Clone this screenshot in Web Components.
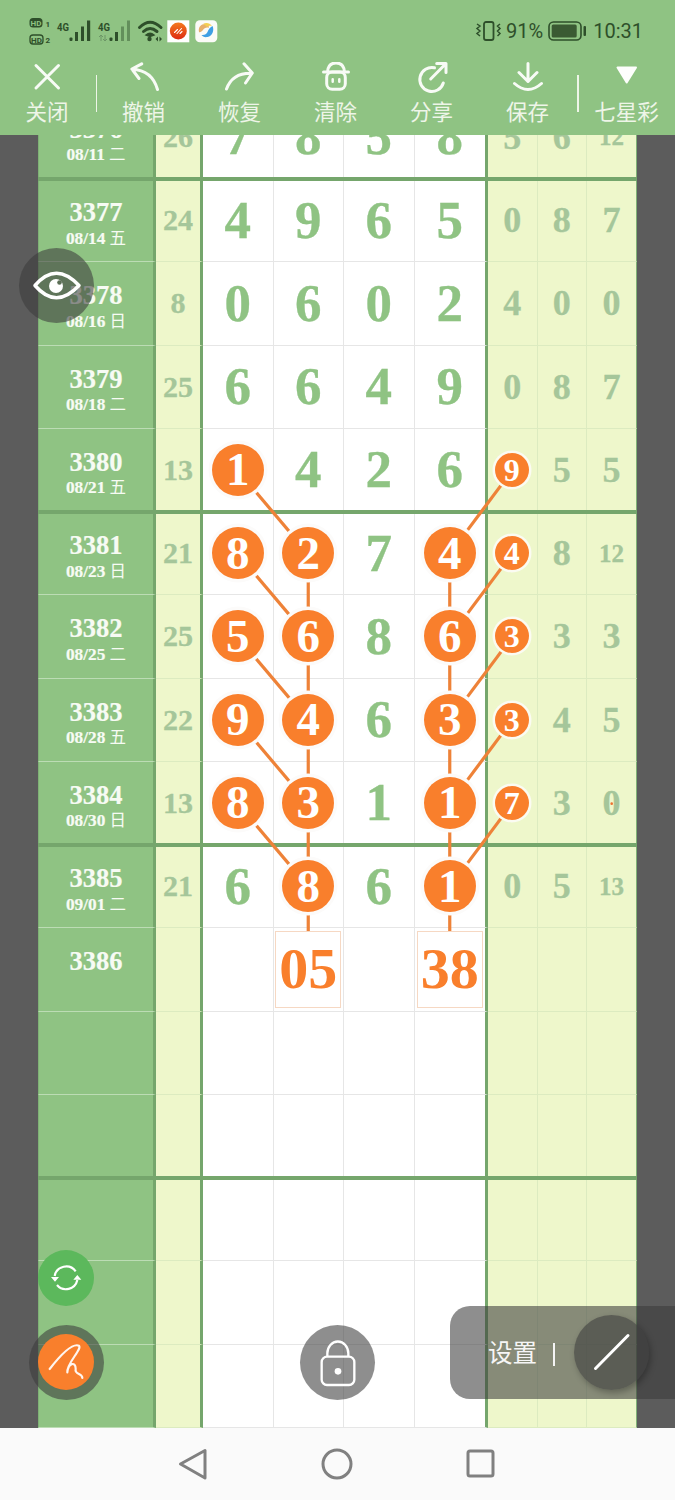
<!DOCTYPE html>
<html lang="zh">
<head>
<meta charset="utf-8">
<title>七星彩</title>
<style>
html,body{margin:0;padding:0;background:#5c5c5c;width:675px;height:1500px;overflow:hidden}
</style>
</head>
<body>
<lotto-app></lotto-app>
<script>
const GREEN='#8fc383', THICK='#75a66c', ORANGE='#f97f2c', SERIF='"Liberation Serif","Noto Serif",serif', CJK='"Noto Sans CJK SC",sans-serif';
const ROW_H=83.25;

class StatusBar extends HTMLElement{
  constructor(){super();this.attachShadow({mode:'open'}).innerHTML=`
  <style>
  :host{display:flex;align-items:center;justify-content:space-between;height:62px;padding:0 32px 0 28px;box-sizing:border-box;color:#2e4f2a;font:400 20px Roboto,sans-serif}
  .r{display:flex;align-items:center}
  svg{display:block}
  text{font-family:Roboto,sans-serif;font-weight:700;fill:#2e4f2a}
  </style>
  <svg width="192" height="40" viewBox="28 11 192 40">
    <rect x="29.5" y="18" width="13" height="9.5" rx="3.5" fill="#2e4f2a"/><text x="36" y="25.8" font-size="8" text-anchor="middle" style="fill:#8fc383">HD</text>
    <text x="45.5" y="26.5" font-size="8">1</text>
    <rect x="30" y="35" width="13" height="9" rx="3" fill="none" stroke="#2e4f2a" stroke-width="1.3"/><text x="36.5" y="42.6" font-size="8" text-anchor="middle">HD</text>
    <text x="45.5" y="43" font-size="8">2</text>
    <text x="57" y="30.5" font-size="11.5" textLength="12" lengthAdjust="spacingAndGlyphs">4G</text>
    <g fill="#2e4f2a"><rect x="69.5" y="37.5" width="3" height="3.5" rx="1"/><rect x="75" y="32" width="3" height="9"/><rect x="81" y="26.500" width="3" height="14.5"/><rect x="87" y="20.500" width="3.200" height="20.500"/></g>
    <text x="98" y="30.500" font-size="11.500" textLength="12" lengthAdjust="spacingAndGlyphs">4G</text>
    <path d="M101 35v6M99 37l2-2 2 2M105 35v6M103 39l2 2 2-2" stroke="#6c9666" stroke-width="1" fill="none"/>
    <g fill="#2e4f2a"><rect x="109.500" y="37.500" width="3" height="3.500" rx="1"/><rect x="115" y="32" width="3" height="9"/></g>
    <g fill="#638f5b"><rect x="121" y="26.500" width="3" height="14.500"/><rect x="127" y="20.500" width="3" height="20.500"/></g>
    <g fill="none" stroke="#2e4f2a" stroke-width="3" stroke-linecap="round"><path d="M139.500 27.500Q150 17 161 27.500"/><path d="M143.500 31.500Q150 25.500 157 31.500"/></g>
    <path d="M146 35Q150 31.500 154 35L150 36.500Z" fill="#2e4f2a" stroke="#2e4f2a" stroke-width="1.500"/>
    <circle cx="149.500" cy="39" r="2.200" fill="#2e4f2a"/>
    <path d="M158 36.500v5l-2.500-2.500zM159.500 36.500v5l2.500-2.500z" fill="#2e4f2a"/>
    <rect x="167.300" y="20.300" width="22" height="22" fill="#fff"/>
    <defs><linearGradient id="r" x1="0" y1="0" x2="0" y2="1"><stop offset="0" stop-color="#f47a20"/><stop offset="1" stop-color="#dd2a12"/></linearGradient></defs>
    <circle cx="178.300" cy="31" r="8.500" fill="url(#r)"/>
    <path d="M174.500 32.500l3-3M177 33.500l4.500-5M180 33.500l2-2" stroke="#fff" stroke-width="1.100" stroke-linecap="round"/>
    <rect x="195.300" y="20.300" width="22" height="22" rx="4.500" fill="#fbfbf8"/>
    <path d="M199 32c-1-5 2-8 6-8 3 0 4 2 4 4-2-1-5 0-6 2-1 1-3 3-4 2z" fill="#e7b06b"/>
    <path d="M203 24c3-2 7-1 9 2-2-.5-4 0-5 1-1-1.500-2.500-2.500-4-3z" fill="#f4cf52"/>
    <path d="M212.500 26c2 4 0 10-5 11-3 .5-5-.5-6-2 3 .5 5-1 6-3 1-3 3-5 5-6z" fill="#3f9fe4"/>
  </svg>
  <div class="r">
    <svg width="27" height="24" viewBox="0 0 27 24" style="margin-right:4px"><rect x="9" y="3" width="9.500" height="18" rx="2" fill="none" stroke="#2e4f2a" stroke-width="1.800"/>
      <path d="M2 5l3 2-3 2.500 3 2.500-3 2.500 3 2.500M25 5l-2.500 2 2.500 2.500-2.500 2.500 2.500 2.500-2.500 2.500" fill="none" stroke="#2e4f2a" stroke-width="1.500"/></svg>
    <span>91%</span>
    <svg width="39" height="20" viewBox="0 0 39 20" style="margin:0 6px 0 5px"><rect x="1" y="1" width="32" height="18" rx="4.500" fill="none" stroke="#2e4f2a" stroke-width="1.600"/><rect x="3.700" y="3.500" width="25" height="13" rx="1.500" fill="#3a5a33"/><rect x="35.500" y="5" width="2.500" height="10" rx="1" fill="#2e4f2a"/></svg>
    <span>10:31</span>
  </div>`;}
}
class ToolItem extends HTMLElement{
  constructor(){super();this.attachShadow({mode:'open'}).innerHTML=`
  <style>
  :host{display:flex;flex-direction:column;align-items:center;flex:0 0 96px;color:#eef5e8;font:400 21.500px/24px ${CJK};white-space:nowrap}
  </style><slot name="icon"></slot><slot></slot>`;}
}
class ToolBar extends HTMLElement{
  constructor(){super();this.attachShadow({mode:'open'}).innerHTML=`
  <style>
  :host{display:flex;height:73px;align-items:flex-start}
  .sep{flex:0 0 1.500px;height:37px;background:#eef5e8;margin-top:13px}
  tool-item:first-of-type{flex-basis:94px}
  svg{display:block;width:32px;height:32px;fill:none;stroke:#f8fbf6;stroke-width:3;stroke-linecap:round;stroke-linejoin:round;margin-bottom:5px}
  </style>
  <tool-item><svg slot="icon" viewBox="0 0 32 32"><path d="M5 3.500L27.500 26M27.500 3.500L5 26"/></svg>关闭</tool-item>
  <div class="sep" style="margin-left:1.500px"></div>
  <tool-item style="margin-left:-1.500px"><svg slot="icon" viewBox="0 0 32 32"><path d="M13.700 1.800L3.900 7 11 16.500M4 7.200Q24 8 29.500 27.500"/></svg>撤销</tool-item>
  <tool-item><svg slot="icon" viewBox="0 0 32 32" style="margin-left:1px"><path d="M20 1.800L28.300 11 21.500 21M28 11.300Q8.500 10.500 2.500 27"/></svg>恢复</tool-item>
  <tool-item><svg slot="icon" viewBox="0 0 32 32"><path d="M7.500 10Q8 1 16 1T24.500 10M3.500 10H28.500"/><rect x="6.700" y="10" width="18.600" height="17.300" rx="5.500"/><path d="M12.700 17.200v2.500M19.300 17.200v2.500" stroke-width="2.500"/></svg>清除</tool-item>
  <tool-item><svg slot="icon" viewBox="0 0 32 32"><path d="M18.500 5.800A12 12 0 1 0 27.300 21M14.700 17L29 2.500M20.700 1.500H30V10.500"/></svg>分享</tool-item>
  <tool-item><svg slot="icon" viewBox="0 0 32 32"><path d="M16 1.500V19.500M7 10.500L16 19.500 25 10.500M2.500 21.500Q16 33.500 29.500 21.500"/></svg>保存</tool-item>
  <div class="sep" style="margin-left:1.500px"></div>
  <tool-item style="flex:0 0 96px"><svg slot="icon" viewBox="0 0 32 32" style="fill:#fdfefc;stroke:#fdfefc;stroke-width:2"><path d="M6.500 5.500H25L15.700 20.500Z"/></svg>七星彩</tool-item>`;}
}
class LottoBall extends HTMLElement{
  constructor(){super();this.attachShadow({mode:'open'}).innerHTML=`
  <style>
  :host{display:flex;align-items:center;justify-content:center;position:relative;z-index:2;border-radius:50%;background:${ORANGE};color:#fff;font:700 47px/1 ${SERIF};width:52px;height:52px;box-shadow:0 0 0 3.500px #fcfbfa}
  :host([small]){width:34px;height:34px;font-size:32px;box-shadow:0 0 0 2.500px #fbfbf2;left:-.500px}
  </style><slot></slot>`;}
}
class PickBox extends HTMLElement{
  constructor(){super();this.attachShadow({mode:'open'}).innerHTML=`
  <style>
  :host{display:flex;align-items:center;justify-content:center;position:relative;z-index:2;box-sizing:border-box;width:66px;height:77px;background:#fff;border:1px solid #f6d8c3;color:${ORANGE};font:700 58px/1 ${SERIF}}
  </style><slot></slot>`;}
}
class LottoRow extends HTMLElement{
  connectedCallback(){
    if(this.shadowRoot)return;
    const no=this.getAttribute('no')||'',date=this.getAttribute('date')||'',sum=this.getAttribute('sum')||'';
    const main=(this.getAttribute('main')||',,,').split(','),side=(this.getAttribute('side')||',,').split(',');
    const hit=v=>v.endsWith('*');
    const mc=main.map((v,i)=>{
      let inner='';
      if(v.startsWith('#'))inner=`<pick-box>${v.slice(1)}</pick-box>`;
      else if(hit(v))inner=`<lotto-ball>${v.slice(0,-1)}</lotto-ball>`;
      else inner=v;
      return `<div class="c m${i==3?' ml':''}">${inner}</div>`;
    }).join('');
    const sc=side.map((v,i)=>{
      const d=v.replace('*','');
      const inner=hit(v)?`<lotto-ball small>${d}</lotto-ball>`:d;
      return `<div class="c s${d.length>1?' two':''}${i==2?' sl':''}">${inner}</div>`;
    }).join('');
    const [dn,dw]=date.split(' ');
    this.attachShadow({mode:'open'}).innerHTML=`
    <style>
    :host{display:grid;grid-template-columns:118px 47px 70.500px 70.500px 70.500px 73.500px 49.500px 49.500px 50px;height:${ROW_H}px;position:relative;box-sizing:border-box}
    :host([thick])::after{content:"";position:absolute;left:0;right:0;bottom:-1.500px;height:3.500px;background:${THICK};z-index:1}
    .c{display:flex;align-items:center;justify-content:center;box-sizing:border-box;border-bottom:1px solid #e6e6e6;font-family:${SERIF};font-weight:700;line-height:1}
    .id{flex-direction:column;justify-content:flex-start;background:${GREEN};color:#f7fbf4;border-bottom-color:#bcdcb4;border-right:3px solid ${THICK};border-left:1.500px solid #7fb176;padding-top:19px;-webkit-text-stroke:.2px #f7fbf4}
    .no{font-size:26.500px;line-height:29px;height:29px}
    .date{font-size:17.300px;line-height:21px;margin-top:-.500px}
    .date span{font:400 16.500px/21px ${CJK};-webkit-text-stroke:0}
    .sum{background:#eef7cb;color:#a5c69a;font-size:30px;border-bottom-color:#dcebc0;border-right:3px solid ${THICK};-webkit-text-stroke:.3px #a5c69a}
    .m{background:#fff;color:${GREEN};font-size:53px;border-right:1px solid #e6e6e6;-webkit-text-stroke:.3px ${GREEN}}
    .ml{border-right:3px solid ${THICK}}
    .s{background:#eef7cb;color:#a5c69a;font-size:36px;border-bottom-color:#dcebc0;border-right:1px solid #dcebc0;-webkit-text-stroke:.3px #a5c69a}
    .two{font-size:25px}
    .sl{border-right:1.500px solid #7fb176}
    lotto-ball{-webkit-text-stroke:0}
    pick-box{-webkit-text-stroke:0}
    </style>
    <div class="c id"><div class="no">${no}</div>${date?`<div class="date">${dn} <span>${dw}</span></div>`:''}</div>
    <div class="c sum">${sum}</div>${mc}${sc}`;
  }
}
class LottoBoard extends HTMLElement{
  constructor(){
    super();
    const rows=[
      ['3376','08/11 二','26','7,8,5,8','5,6,12',1],
      ['3377','08/14 五','24','4,9,6,5','0,8,7'],
      ['3378','08/16 日','8','0,6,0,2','4,0,0'],
      ['3379','08/18 二','25','6,6,4,9','0,8,7'],
      ['3380','08/21 五','13','1*,4,2,6','9*,5,5',1],
      ['3381','08/23 日','21','8*,2*,7,4*','4*,8,12'],
      ['3382','08/25 二','25','5*,6*,8,6*','3*,3,3'],
      ['3383','08/28 五','22','9*,4*,6,3*','3*,4,5'],
      ['3384','08/30 日','13','8*,3*,1,1*','7*,3,0',1],
      ['3385','09/01 二','21','6,8*,6,1*','0,5,13'],
      ['3386','','',',#05,,#38',',,'],
      ['','','',',,,',',,'],
      ['','','',',,,',',,',1],
      ['','','',',,,',',,'],
      ['','','',',,,',',,'],
      ['','','',',,,',',,'],
    ];
    const cy=i=>ROW_H*(i+.5), X=[199.750,270.250,411.750,474];
    let seg='';
    const L=(a,b,c,d)=>{seg+=`<line x1="${a}" y1="${b}" x2="${c}" y2="${d}"/>`;};
    for(let i=4;i<=8;i++){
      L(X[0],cy(i),X[1],cy(i+1));
      L(X[3],cy(i),X[2],cy(i+1));
    }
    for(let i=5;i<=9;i++){
      L(X[1],cy(i),X[1],cy(i+1)-5);
      L(X[2],cy(i),X[2],cy(i+1)-5);
    }
    this.attachShadow({mode:'open'}).innerHTML=`
    <style>
    :host{display:block;position:relative;isolation:isolate;width:599px;margin-top:-39.250px}
    svg{position:absolute;left:0;top:0;z-index:1;pointer-events:none}
    line{stroke:#ee8238;stroke-width:3.200}
    </style>
    ${rows.map(r=>`<lotto-row no="${r[0]}" date="${r[1]}" sum="${r[2]}" main="${r[3]}" side="${r[4]}"${r[5]?' thick':''}></lotto-row>`).join('')}
    <svg width="599" height="1332" viewBox="0 0 599 1332">${seg}<circle cx="573.700" cy="${cy(8)}" r="1.300" fill="#ee7030"/></svg>`;
  }
}
class FloatControls extends HTMLElement{
  constructor(){super();this.attachShadow({mode:'open'}).innerHTML=`
  <style>
  :host{display:block}
  .f{position:absolute;border-radius:50%;display:flex;align-items:center;justify-content:center;z-index:5}
  .dark{background:rgba(60,60,60,.58)}
  .eye{left:19px;top:248px;width:75px;height:75px}
  .sync{left:38px;top:1250px;width:56px;height:56px;background:#5cb85c}
  .pen{left:28.500px;top:1324.500px;width:75px;height:75px}
  .pen i{display:flex;width:56px;height:56px;border-radius:50%;background:${ORANGE}}
  .lock{left:300px;top:1325px;width:75px;height:75px}
  .panel{position:absolute;z-index:5;left:450px;top:1306px;width:225px;height:93px;box-sizing:border-box;border-radius:20px 0 0 20px;background:rgba(60,60,60,.58);display:flex;align-items:center;padding-left:38px;color:#f6f6f6;font:400 24.500px/1 ${CJK}}
  .bar{width:2px;height:23px;background:#f4f4f4;margin-left:16px;margin-top:3px}
  .knob{width:75px;height:75px;border-radius:50%;background:rgba(60,60,60,.58);box-shadow:2px 3px 6px rgba(0,0,0,.28);margin-left:19px;margin-top:-1px;display:flex;align-items:center;justify-content:center}
  svg{display:block}
  </style>
  <div class="f dark eye"><svg width="75" height="75" viewBox="0 0 75 75">
    <path d="M16 37.500Q37 13 60 37.500 37 62 16 37.500Z" fill="none" stroke="#fff" stroke-width="3.500" stroke-linejoin="round"/>
    <circle cx="37" cy="38" r="7" fill="#fff"/><circle cx="40.500" cy="34.500" r="2.300" fill="#5b6e55"/></svg></div>
  <div class="f sync"><svg width="56" height="56" viewBox="113 88 168 168">
    <g fill="none" stroke="#fff" stroke-width="6.500"><path d="M163 166A35 35 0 0 1 226 152"/><path d="M231 178A35 35 0 0 1 170 193"/></g>
    <path d="M152 169H176L164 183ZM219 177H243L231 163Z" fill="#fff"/></svg></div>
  <div class="f dark pen"><i><svg width="56" height="56" viewBox="113 342 168 168">
    <path d="M148 447C175 412 215 368 236 377C246 388 198 430 201 457C204 428 226 424 226 446C222 466 246 458 246 474" fill="none" stroke="#fff" stroke-width="6.500" stroke-linecap="round" stroke-linejoin="round" opacity=".92"/></svg></i></div>
  <div class="f dark lock"><svg width="75" height="75" viewBox="900 313 225 225">
    <rect x="965" y="408" width="98" height="85" rx="16" fill="none" stroke="#fff" stroke-width="7"/>
    <path d="M982 408V398A31 35 0 0 1 1045 398V408" fill="none" stroke="#fff" stroke-width="7"/>
    <circle cx="1014" cy="452" r="10" fill="#fff"/></svg></div>
  <div class="panel"><span>设置</span><div class="bar"></div>
    <div class="knob"><svg width="40" height="40" viewBox="0 0 40 40"><path d="M3.500 36.500L36 3.500" stroke="#fff" stroke-width="3" stroke-linecap="round"/></svg></div></div>`;}
}
class NavBar extends HTMLElement{
  constructor(){super();this.attachShadow({mode:'open'}).innerHTML=`
  <style>
  :host{display:flex;flex:0 0 72px;height:72px;background:#fafafa;align-items:center;justify-content:center;gap:112px;box-sizing:border-box;padding:0 2px 1px 0;position:relative;z-index:1}
  svg{display:block;fill:none;stroke:#808080;stroke-width:3;stroke-linejoin:round}
  </style>
  <svg width="32" height="32" viewBox="0 0 32 32"><path d="M3.500 16L28 2.500V30Z"/></svg>
  <svg width="32" height="32" viewBox="0 0 32 32"><circle cx="16" cy="16" r="14"/></svg>
  <svg width="32" height="32" viewBox="0 0 32 32"><rect x="3" y="3" width="25" height="25" rx="2"/></svg>`;}
}
class LottoApp extends HTMLElement{
  constructor(){super();this.attachShadow({mode:'open'}).innerHTML=`
  <style>
  :host{display:flex;flex-direction:column;position:relative;width:675px;height:1500px;overflow:hidden}
  header{flex:0 0 135px;background:${GREEN};position:relative;z-index:3}
  main{flex:1 1 auto;min-height:0;overflow:hidden;background:#5c5c5c;padding:0 38px}
  </style>
  <header><status-bar></status-bar><tool-bar></tool-bar></header>
  <main><lotto-board></lotto-board></main>
  <nav-bar></nav-bar>
  <float-controls></float-controls>`;}
}
customElements.define('status-bar',StatusBar);
customElements.define('tool-item',ToolItem);
customElements.define('tool-bar',ToolBar);
customElements.define('lotto-ball',LottoBall);
customElements.define('pick-box',PickBox);
customElements.define('lotto-row',LottoRow);
customElements.define('lotto-board',LottoBoard);
customElements.define('float-controls',FloatControls);
customElements.define('nav-bar',NavBar);
customElements.define('lotto-app',LottoApp);
</script>
</body>
</html>
